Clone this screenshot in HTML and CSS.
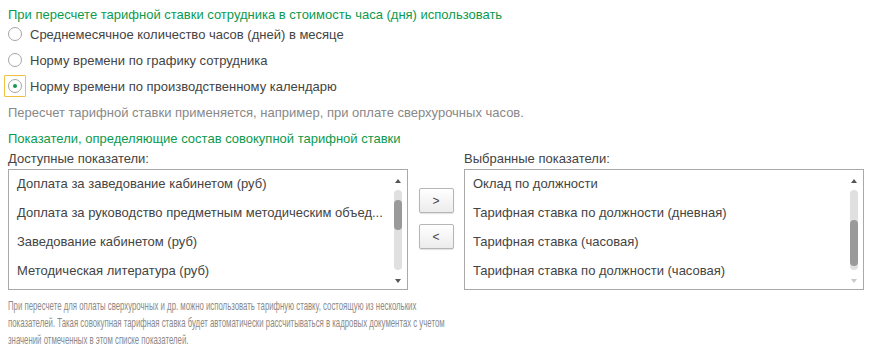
FILE: index.html
```html
<!DOCTYPE html>
<html><head><meta charset="utf-8">
 <title>Совокупная тарифная ставка</title>
 <link rel="stylesheet" href="styles.css">
</head>
<body>
   <div class="form">
      <div class="group-title">При пересчете тарифной ставки сотрудника в стоимость часа (дня) использовать</div>
      <div class="radio-list">
         <div class="radio"><span class="radio-box"><span class="radio-circle"></span></span>Среднемесячное количество часов (дней) в месяце</div>
         <div class="radio"><span class="radio-box"><span class="radio-circle"></span></span>Норму времени по графику сотрудника</div>
         <div class="radio"><span class="radio-box focused"><span class="radio-circle checked"></span></span>Норму времени по производственному календарю</div>
      </div>
      <div class="hint">Пересчет тарифной ставки применяется, например, при оплате сверхурочных часов.</div>

      <div class="group-title second">Показатели, определяющие состав совокупной тарифной ставки</div>
      <div class="lists">
         <div class="list-col">
            <div class="list-label">Доступные показатели:</div>
            <div class="list-box">
               <ul class="list-items">
                  <li>Доплата за заведование кабинетом (руб)</li>
                  <li>Доплата за руководство предметным методическим объед...</li>
                  <li>Заведование кабинетом (руб)</li>
                  <li>Методическая литература (руб)</li>
               </ul>
               <div class="scroll">
                  <span class="arrow up"></span>
                  <div class="track"><div class="thumb thumb-top"></div></div>
                  <span class="arrow down"></span>
               </div>
            </div>
         </div>
         <div class="move-buttons">
            <button class="move">&gt;</button>
            <button class="move">&lt;</button>
         </div>
         <div class="list-col">
            <div class="list-label">Выбранные показатели:</div>
            <div class="list-box">
               <ul class="list-items">
                  <li>Оклад по должности</li>
                  <li>Тарифная ставка по должности (дневная)</li>
                  <li>Тарифная ставка (часовая)</li>
                  <li>Тарифная ставка по должности (часовая)</li>
               </ul>
               <div class="scroll">
                  <span class="arrow up"></span>
                  <div class="track"><div class="thumb thumb-bottom"></div></div>
                  <span class="arrow down faded"></span>
               </div>
            </div>
         </div>
      </div>
      <div class="footnote">
         <span class="footnote-line">При пересчете для оплаты сверхурочных и др. можно использовать тарифную ставку, состоящую из нескольких</span>
         <span class="footnote-line">показателей. Такая совокупная тарифная ставка будет автоматически рассчитываться в кадровых документах с учетом</span>
         <span class="footnote-line">значений отмеченных в этом списке показателей.</span>
      </div>
   </div>
</body></html>
```

FILE: styles.css
```css
body {
  padding: 0;
  margin: 0;
  background: #fff;
  font-family: "Liberation Sans", Arial, sans-serif;
  font-size: 13px;
  color: #444;
}
.form {
  padding: 7px 8px 0 8px;
}
.group-title {
  color: #0c9a4e;
  line-height: 16px;
}
.group-title.second {
  margin-top: 10px;
}
.radio-list {
  margin-top: -2px;
}
.radio {
  display: flex;
  align-items: center;
  height: 26px;
}
.radio-box {
  display: flex;
  align-items: center;
  justify-content: center;
  width: 22px;
  height: 22px;
  margin: 0 4px 0 -4px;
  box-sizing: border-box;
  border: 1px solid transparent;
}
.radio-box.focused {
  border-color: #f0c040;
  border-radius: 1px;
}
.radio-circle {
  width: 12px;
  height: 12px;
  border: 1px solid #a6a6a6;
  border-radius: 50%;
  background: #fff;
  position: relative;
}
.radio-circle.checked::after {
  content: "";
  position: absolute;
  left: 4px;
  top: 4px;
  width: 4px;
  height: 4px;
  border-radius: 50%;
  background: #109c4a;
}
.hint {
  margin-top: 6px;
  color: #888;
  line-height: 16px;
}
.list-label {
  margin-top: 4px;
  line-height: 16px;
}
.lists {
  display: flex;
}
.list-col {
  width: 400px;
}
.list-box {
  display: flex;
  height: 121px;
  margin-top: 2px;
  border: 1px solid #a9a9a9;
  box-sizing: border-box;
}
.list-items {
  list-style: none;
  margin: 0;
  padding: 0 0 0 8px;
  flex: 1;
}
.list-items li {
  height: 29px;
  line-height: 29px;
  white-space: nowrap;
}
.list-items li:first-child {
  height: 28px;
  line-height: 28px;
}
.scroll {
  width: 12px;
  margin-right: 3px;
  display: flex;
  flex-direction: column;
  align-items: center;
  padding: 9px 0 6px;
}
.arrow {
  width: 0;
  height: 0;
  border-left: 3px solid transparent;
  border-right: 3px solid transparent;
}
.arrow.up {
  border-bottom: 4px solid #555;
}
.arrow.down {
  border-top: 4px solid #555;
}
.arrow.faded {
  border-top-color: #c8c8c8;
}
.track {
  flex: 1;
  width: 8px;
  margin: 7px 0 9px;
  border-radius: 4px;
  background: #e0e0e0;
  display: flex;
  flex-direction: column;
}
.thumb {
  border-radius: 4px;
  background: #9a9a9a;
}
.thumb-top {
  height: 30px;
  margin-top: 10px;
}
.thumb-bottom {
  height: 46px;
  margin-top: 30px;
}
.move-buttons {
  width: 56px;
  display: flex;
  flex-direction: column;
  align-items: center;
  padding-top: 41px;
  gap: 11px;
}
.move {
  width: 35px;
  height: 25px;
  padding: 0;
  border: 1px solid #b5b5b5;
  border-radius: 2px;
  background: linear-gradient(#ffffff, #ececec);
  box-shadow: 0 1px 1px rgba(0, 0, 0, 0.12);
  font-family: "Liberation Sans", Arial, sans-serif;
  font-size: 12px;
  color: #444;
}
.footnote {
  margin-top: 7px;
  color: #8a8a8a;
  font-size: 13px;
  line-height: 17px;
  white-space: nowrap;
  transform: scaleX(0.6);
  transform-origin: left top;
}
.footnote-line {
  display: block;
}
```
